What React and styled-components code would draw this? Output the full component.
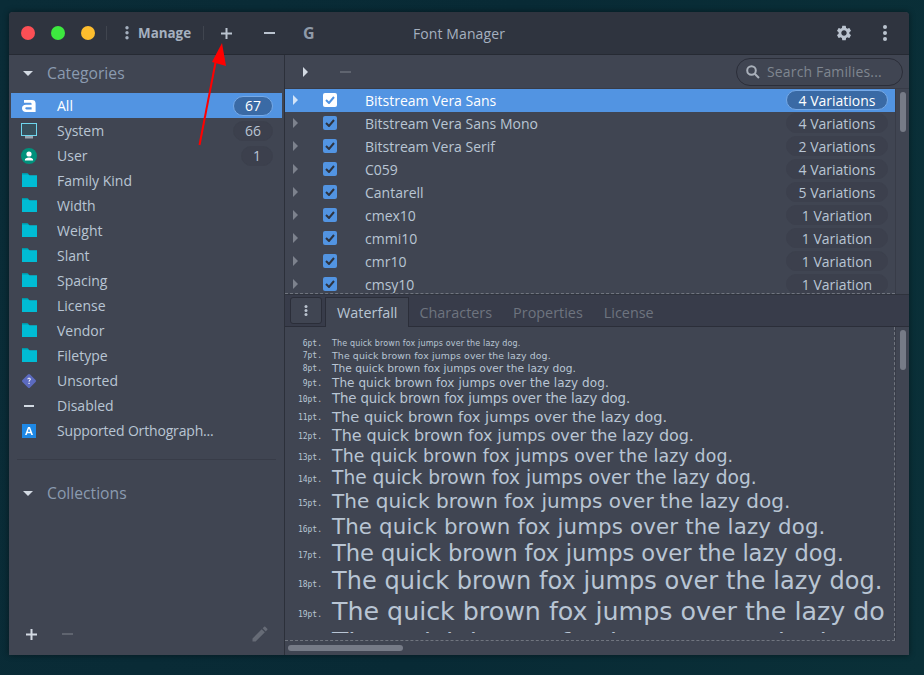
import React from 'react';
import styled, { createGlobalStyle } from 'styled-components';
import { MdSettings, MdEdit } from 'react-icons/md';

const GlobalStyle = createGlobalStyle`
  html, body {
    margin: 0;
    padding: 0;
  }
  body {
    background: #0a2a35;
    font-family: "Open Sans", "Noto Sans", sans-serif;
  }
`;

const Desktop = styled.div`
  position: relative;
  width: 924px;
  height: 675px;
  padding: 12px 15px 20px 9px;
  box-sizing: border-box;
  background: linear-gradient(100deg, #0a2c37 0%, #082a35 50%, #0a3038 100%);
  overflow: hidden;
`;

const Window = styled.div`
  width: 900px;
  height: 643px;
  display: flex;
  flex-direction: column;
  background: #404552;
  border-radius: 4px 4px 0 0;
  box-shadow: 0 0 6px rgba(0, 0, 0, 0.45);
  overflow: hidden;
`;

const Header = styled.header`
  flex: 0 0 42px;
  display: grid;
  grid-template-columns: 1fr auto 1fr;
  align-items: center;
  background: #2f343f;
  border-bottom: 1px solid #262a33;
  box-sizing: content-box;
  height: 42px;
`;

const HeaderLeft = styled.div`
  display: flex;
  align-items: center;
  height: 100%;
  padding-left: 12px;
`;

const HeaderRight = styled.div`
  display: flex;
  align-items: center;
  justify-content: flex-end;
  gap: 29px;
  padding-right: 21px;
  color: #bac3cf;
`;

const Light = styled.span`
  width: 14px;
  height: 14px;
  border-radius: 50%;
  margin-right: ${(p) => p.$after}px;
  background: ${(p) => p.$color};
`;

const HeaderRule = styled.span`
  width: 1px;
  height: 14px;
  background: #40454f;
  margin-right: ${(p) => p.$after}px;
`;

const ManageLabel = styled.span`
  font-size: 13.4px;
  font-weight: 700;
  color: #a5b0bf;
  margin: 0 12px 0 8px;
`;

const Glyph = styled.span`
  display: flex;
  align-items: center;
  justify-content: center;
  width: ${(p) => p.$w || 14}px;
  margin-left: ${(p) => p.$before || 0}px;
  margin-right: ${(p) => p.$after || 0}px;
`;

const GLetter = styled.span`
  font-size: 16px;
  font-weight: 700;
  color: #8f9aa8;
`;

const Title = styled.div`
  font-size: 14px;
  color: #a5b0bf;
  letter-spacing: 0.1px;
`;

const Body = styled.div`
  flex: 1;
  min-height: 0;
  display: flex;
`;

const Sidebar = styled.aside`
  width: 275px;
  flex: none;
  display: flex;
  flex-direction: column;
  border-right: 1px solid #2c303a;
`;

const SectionHead = styled.div`
  display: flex;
  align-items: center;
  height: 38px;
  box-sizing: border-box;
  padding: 0 0 ${(p) => p.$lift || 0}px 14px;
  font-size: 15.7px;
  color: #8b9bb0;
`;

const DownCaret = styled.span`
  width: 0;
  height: 0;
  border-left: 5px solid transparent;
  border-right: 5px solid transparent;
  border-top: 5px solid #d3dae3;
  margin-right: 14px;
`;

const CatRow = styled.div`
  display: flex;
  align-items: center;
  height: 25px;
  margin: 0 2px;
  padding: 0 9px 0 10px;
  font-size: 14px;
  color: ${(p) => (p.$active ? '#ffffff' : '#b9c5d4')};
  background: ${(p) => (p.$active ? '#5294e2' : 'transparent')};
`;

const CatIcon = styled.span`
  width: 16px;
  height: 16px;
  flex: none;
  display: flex;
  align-items: center;
  justify-content: center;
  margin-right: 20px;
`;

const CatLabel = styled.span`
  flex: 1;
  letter-spacing: ${(p) => (p.$tight ? '-0.17px' : '0')};
`;

const CountPill = styled.span`
  flex: none;
  display: flex;
  align-items: center;
  justify-content: center;
  width: ${(p) => (p.$w ? `${p.$w}px` : 'auto')};
  height: 20px;
  padding: 0 11px;
  box-sizing: border-box;
  border-radius: 10px;
  font-size: 14px;
  white-space: nowrap;
  background: ${(p) => (p.$active ? '#3a6aa5' : '#3c404d')};
  border: 1px solid ${(p) => (p.$active ? '#76a9e6' : '#3c404d')};
  color: ${(p) => (p.$active ? '#ffffff' : '#b9c5d4')};
`;

const SideRule = styled.div`
  height: 1px;
  margin: 16px 8px 14px;
  background: #383c48;
`;

const SideFooter = styled.div`
  margin-top: auto;
  height: 42px;
  display: flex;
  align-items: center;
  padding: 0 14px 0 17px;
  box-sizing: border-box;
`;

const FooterGlyph = styled.span`
  display: flex;
  margin-right: ${(p) => p.$after || 0}px;
  margin-left: ${(p) => (p.$push ? 'auto' : 0)};
`;

const Main = styled.main`
  flex: 1;
  min-width: 0;
  display: flex;
  flex-direction: column;
`;

const ListBar = styled.div`
  flex: 0 0 34px;
  display: flex;
  align-items: center;
  padding: 0 6px 0 18px;
  border-bottom: 1px solid #383c48;
  box-sizing: border-box;
`;

const RightCaret = styled.span`
  width: 0;
  height: 0;
  flex: none;
  border-top: 5px solid transparent;
  border-bottom: 5px solid transparent;
  border-left: 5px solid ${(p) => p.$color || '#7d828d'};
`;

const SearchBox = styled.div`
  margin-left: auto;
  width: 167px;
  height: 28px;
  box-sizing: border-box;
  display: flex;
  align-items: center;
  gap: 7px;
  padding-left: 9px;
  border-radius: 14px;
  border: 1px solid #2b2e39;
  background: #404552;
  font-size: 14px;
  letter-spacing: 0.15px;
  color: #7f8690;
`;

const SplitTop = styled.div`
  flex: 0 0 205px;
  display: flex;
  min-height: 0;
`;

const FamilyList = styled.div`
  flex: 1;
  min-width: 0;
  overflow: hidden;
  border-bottom: 1px dashed #70757f;
  height: 204px;
`;

const FamilyRow = styled.div`
  display: flex;
  align-items: center;
  height: 23px;
  box-sizing: border-box;
  padding: 0 7px 1px 8px;
  font-size: 14px;
  color: ${(p) => (p.$active ? '#ffffff' : '#b9c5d4')};
  background: ${(p) => (p.$active ? '#5294e2' : 'transparent')};
`;

const CheckBox = styled.span`
  width: 14px;
  height: 14px;
  flex: none;
  margin: 0 28px 0 25px;
  border-radius: 2px;
  display: flex;
  align-items: center;
  justify-content: center;
  background: ${(p) => (p.$active ? '#ffffff' : '#5294e2')};
`;

const FamilyName = styled.span`
  flex: 1;
`;

const VScroll = styled.div`
  flex: 0 0 13px;
  box-sizing: border-box;
  padding: ${(p) => p.$top}px 3px 0 4px;
  border-left: 1px solid #383c48;
`;

const Thumb = styled.div`
  width: 6px;
  height: 40px;
  border-radius: 3px;
  background: #767b87;
`;

const TabBar = styled.div`
  flex: 0 0 33px;
  display: flex;
  align-items: flex-end;
  box-sizing: border-box;
  padding-left: 5px;
  background: #383c4a;
  border-top: 1px solid #2f333d;
  border-bottom: 1px solid #2b2e39;
`;

const MenuButton = styled.div`
  width: 32px;
  height: 27px;
  align-self: center;
  display: flex;
  align-items: center;
  justify-content: center;
  box-sizing: border-box;
  margin-right: 3px;
  border-radius: 3px;
  background: #404552;
  border: 1px solid #2b2e39;
`;

const Tab = styled.div`
  height: ${(p) => (p.$active ? 30 : 28)}px;
  display: flex;
  align-items: center;
  box-sizing: border-box;
  padding: 0 ${(p) => (p.$active ? 11 : 10)}px;
  margin-right: ${(p) => (p.$active ? 0 : 1)}px;
  font-size: 14.4px;
  color: ${(p) => (p.$active ? '#b9c5d4' : '#6e747f')};
  background: ${(p) => (p.$active ? '#404552' : 'transparent')};
  border: ${(p) => (p.$active ? '1px solid #2b2e39' : 'none')};
  border-bottom: none;
  margin-bottom: ${(p) => (p.$active ? -1 : 0)}px;
`;

const SplitBottom = styled.div`
  flex: 1;
  min-height: 0;
  display: flex;
`;

const WaterfallFrame = styled.div`
  flex: 1;
  min-width: 0;
  border-right: 1px dashed #70757f;
  border-bottom: 1px dashed #70757f;
  box-sizing: border-box;
  padding: 11px 10px 7px 0;
`;

const WaterfallClip = styled.div`
  height: 100%;
  overflow: hidden;
`;

const SampleRow = styled.div`
  height: ${(p) => p.$h}px;
  display: flex;
  align-items: center;
  white-space: nowrap;
`;

const PtLabel = styled.span`
  flex: 0 0 37px;
  text-align: right;
  margin: ${(p) => p.$drop}px 10px 0 0;
  font-family: "DejaVu Sans Mono", monospace;
  font-size: 8px;
  color: #b9c5d4;
`;

const SampleText = styled.span`
  font-family: "DejaVu Sans", sans-serif;
  font-size: ${(p) => p.$size}px;
  letter-spacing: ${(p) => p.$track}px;
  color: #b9c5d4;
`;

const HScroll = styled.div`
  flex: 0 0 14px;
  padding: 4px 0 0 3px;
  box-sizing: border-box;
`;

const HThumb = styled.div`
  width: 115px;
  height: 6px;
  border-radius: 3px;
  background: #767b87;
`;

const ArrowLayer = styled.svg`
  position: absolute;
  left: 0;
  top: 0;
  pointer-events: none;
`;

const Kebab = ({ color = '#bac3cf', r = 2, gap = 6 }) => (
  <svg width="6" height={gap * 2 + r * 2 + 2} viewBox={`0 0 6 ${gap * 2 + r * 2 + 2}`}>
    <circle cx="3" cy={r + 1} r={r} fill={color} />
    <circle cx="3" cy={r + 1 + gap} r={r} fill={color} />
    <circle cx="3" cy={r + 1 + gap * 2} r={r} fill={color} />
  </svg>
);

const Plus = ({ color = '#bac3cf', size = 11 }) => (
  <svg width={size} height={size} viewBox="0 0 11 11">
    <path d="M4.5 0h2v4.5H11v2H6.5V11h-2V6.5H0v-2h4.5z" fill={color} />
  </svg>
);

const Minus = ({ color = '#bac3cf', size = 11 }) => (
  <svg width={size} height="2" viewBox="0 0 11 2">
    <rect width="11" height="2" fill={color} />
  </svg>
);

const Folder = () => (
  <svg width="15" height="15" viewBox="0 0 15 15">
    <path d="M0 1h6L7.500 2.300H15V14H0z" fill="#00bcd4" />
    <path d="M0 0h5.500L7 1.500H0z" fill="#0097a7" />
  </svg>
);

const categoryIcons = {
  all: (
    <svg width="14" height="12" viewBox="0 0 14 12">
      <path d="M2 0h8c2.4 0 3.6 1.2 3.6 3.4V12H4C1.5 12 0 10.700 0 8.300 0 6 1.500 4.800 4 4.800h5.600V4c0-.9-.5-1.300-1.500-1.300H2zM4.600 7.200c-.9 0-1.300.4-1.300 1.100s.4 1.100 1.300 1.100h5V7.200z" fill="#ffffff" />
    </svg>
  ),
  system: (
    <svg width="16" height="16" viewBox="0 0 16 16">
      <rect x="0.500" y="0.500" width="15" height="12" fill="#37505c" stroke="#6fd6ee" />
      <rect x="4" y="13" width="8" height="2.500" fill="#9aa3ad" />
    </svg>
  ),
  user: (
    <svg width="16" height="16" viewBox="0 0 16 16">
      <circle cx="8" cy="8" r="8" fill="#00917c" />
      <circle cx="8" cy="6" r="2.600" fill="#ffffff" />
      <path d="M3.800 12c0-1.800 2-2.600 4.200-2.600s4.200.8 4.200 2.600c0 .3-.2.6-.6.6H4.400c-.4 0-.6-.3-.6-.6z" fill="#ffffff" />
    </svg>
  ),
  folder: <Folder />,
  unsorted: (
    <svg width="16" height="16" viewBox="0 0 16 16">
      <rect x="2.600" y="2.600" width="10.800" height="10.800" rx="1.500" transform="rotate(45 8 8)" fill="#5c6bc0" />
      <path d="M6.300 6.300c0-1 .8-1.600 1.800-1.600s1.700.6 1.700 1.500c0 1.300-1.300 1.300-1.300 2.500H7.600c0-1.700 1.100-1.700 1.100-2.500 0-.3-.2-.6-.7-.6s-.7.3-.7.7zM7.500 9.700h1.100v1.200H7.500z" fill="#ffffff" />
    </svg>
  ),
  disabled: (
    <svg width="10" height="2" viewBox="0 0 10 2">
      <rect width="10" height="2" fill="#d3dae3" />
    </svg>
  ),
  ortho: (
    <svg width="14" height="14" viewBox="0 0 14 14">
      <rect width="14" height="14" fill="#1e88e5" />
      <path d="M6 3h2l3 8H9.300l-.6-1.800H5.300L4.700 11H3zM5.800 7.800h2.400L7 4.600z" fill="#ffffff" />
    </svg>
  ),
};

const categories = [
  { label: 'All', icon: 'all', count: '67', active: true },
  { label: 'System', icon: 'system', count: '66' },
  { label: 'User', icon: 'user', count: '1' },
  { label: 'Family Kind', icon: 'folder' },
  { label: 'Width', icon: 'folder' },
  { label: 'Weight', icon: 'folder' },
  { label: 'Slant', icon: 'folder' },
  { label: 'Spacing', icon: 'folder' },
  { label: 'License', icon: 'folder' },
  { label: 'Vendor', icon: 'folder' },
  { label: 'Filetype', icon: 'folder' },
  { label: 'Unsorted', icon: 'unsorted' },
  { label: 'Disabled', icon: 'disabled' },
  { label: 'Supported Orthograph...', icon: 'ortho', tight: true },
];

const families = [
  ['Bitstream Vera Sans', '4 Variations'],
  ['Bitstream Vera Sans Mono', '4 Variations'],
  ['Bitstream Vera Serif', '2 Variations'],
  ['C059', '4 Variations'],
  ['Cantarell', '5 Variations'],
  ['cmex10', '1 Variation'],
  ['cmmi10', '1 Variation'],
  ['cmr10', '1 Variation'],
  ['cmsy10', '1 Variation'],
];

// row height and tracking per point size, the browser hints these narrower or wider than gtk did
const samples = [
  { pt: 6, h: 11, track: 0.136 },
  { pt: 7, h: 12, track: 0.136 },
  { pt: 8, h: 14, track: 0.02 },
  { pt: 9, h: 15, track: 0.07 },
  { pt: 10, h: 17, track: -0.136 },
  { pt: 11, h: 18, track: 0.02 },
  { pt: 12, h: 20, track: -0.07 },
  { pt: 13, h: 21, track: 0.136 },
  { pt: 14, h: 23, track: -0.02 },
  { pt: 15, h: 24, track: 0.05 },
  { pt: 16, h: 26, track: 0.16 },
  { pt: 17, h: 27, track: -0.11 },
  { pt: 18, h: 29, track: 0.07 },
  { pt: 19, h: 31, track: -0.02 },
  { pt: 20, h: 33, track: 0 },
];

export default function App() {
  return (
    <Desktop>
      <GlobalStyle />
      <Window>
        <Header>
          <HeaderLeft>
            <Light $color="#fc4f55" $after={16} />
            <Light $color="#3de83f" $after={16} />
            <Light $color="#fdbd2e" $after={11} />
            <HeaderRule $after={17} />
            <Kebab color="#a5b0bf" r={1.7} gap={5} />
            <ManageLabel>Manage</ManageLabel>
            <HeaderRule $after={17} />
            <Glyph $w={11} $after={32}><Plus /></Glyph>
            <Glyph $w={11} $after={28}><Minus /></Glyph>
            <GLetter>G</GLetter>
          </HeaderLeft>
          <Title>Font Manager</Title>
          <HeaderRight>
            <MdSettings size={18} />
            <Kebab r={2} gap={6} />
          </HeaderRight>
        </Header>
        <Body>
          <Sidebar>
            <SectionHead $lift={2}><DownCaret />Categories</SectionHead>
            {categories.map((c) => (
              <CatRow key={c.label} $active={c.active}>
                <CatIcon>{categoryIcons[c.icon]}</CatIcon>
                <CatLabel $tight={c.tight}>{c.label}</CatLabel>
                {c.count && <CountPill $active={c.active}>{c.count}</CountPill>}
              </CatRow>
            ))}
            <SideRule />
            <SectionHead><DownCaret />Collections</SectionHead>
            <SideFooter>
              <FooterGlyph $after={25}><Plus color="#d3dae3" /></FooterGlyph>
              <FooterGlyph><Minus color="#5f646f" /></FooterGlyph>
              <FooterGlyph $push><MdEdit size={20} color="#666b76" /></FooterGlyph>
            </SideFooter>
          </Sidebar>
          <Main>
            <ListBar>
              <RightCaret $color="#d3dae3" />
              <Glyph $w={11} $before={32}><Minus color="#5f646f" /></Glyph>
              <SearchBox>
                <svg width="14" height="14" viewBox="0 0 14 14" fill="none" stroke="#a9b0ba" strokeWidth="2">
                  <circle cx="5.500" cy="5.500" r="4.300" />
                  <path d="M8.700 8.700 13 13" />
                </svg>
                Search Families...
              </SearchBox>
            </ListBar>
            <SplitTop>
              <FamilyList>
                {families.map(([name, count], i) => (
                  <FamilyRow key={name} $active={i === 0}>
                    <RightCaret $color={i === 0 ? '#d3e4f8' : '#7d828d'} />
                    <CheckBox $active={i === 0}>
                      <svg width="10" height="8" viewBox="0 0 10 8" fill="none" stroke={i === 0 ? '#5294e2' : '#2f343f'} strokeWidth="2">
                        <path d="M1 4l3 3 5-6" />
                      </svg>
                    </CheckBox>
                    <FamilyName>{name}</FamilyName>
                    <CountPill $active={i === 0} $w={102}>{count}</CountPill>
                  </FamilyRow>
                ))}
              </FamilyList>
              <VScroll $top={3}><Thumb /></VScroll>
            </SplitTop>
            <TabBar>
              <MenuButton><Kebab r={1.5} gap={4} /></MenuButton>
              <Tab $active>Waterfall</Tab>
              <Tab>Characters</Tab>
              <Tab>Properties</Tab>
              <Tab>License</Tab>
            </TabBar>
            <SplitBottom>
              <WaterfallFrame>
                <WaterfallClip>
                  {samples.map((s) => (
                    <SampleRow key={s.pt} $h={s.h}>
                      <PtLabel $drop={(s.pt - 6) * 0.6}>{s.pt}pt.</PtLabel>
                      <SampleText $size={(s.pt * 4) / 3} $track={s.track}>The quick brown fox jumps over the lazy dog.</SampleText>
                    </SampleRow>
                  ))}
                </WaterfallClip>
              </WaterfallFrame>
              <VScroll $top={3}><Thumb /></VScroll>
            </SplitBottom>
            <HScroll><HThumb /></HScroll>
          </Main>
        </Body>
      </Window>
      <ArrowLayer width="924" height="675" viewBox="0 0 924 675">
        <path d="M199.500 145 216 60" stroke="#ff0000" strokeWidth="2" fill="none" />
        <path d="M222 43l4 23-14-4z" fill="#ff0000" />
      </ArrowLayer>
    </Desktop>
  );
}
